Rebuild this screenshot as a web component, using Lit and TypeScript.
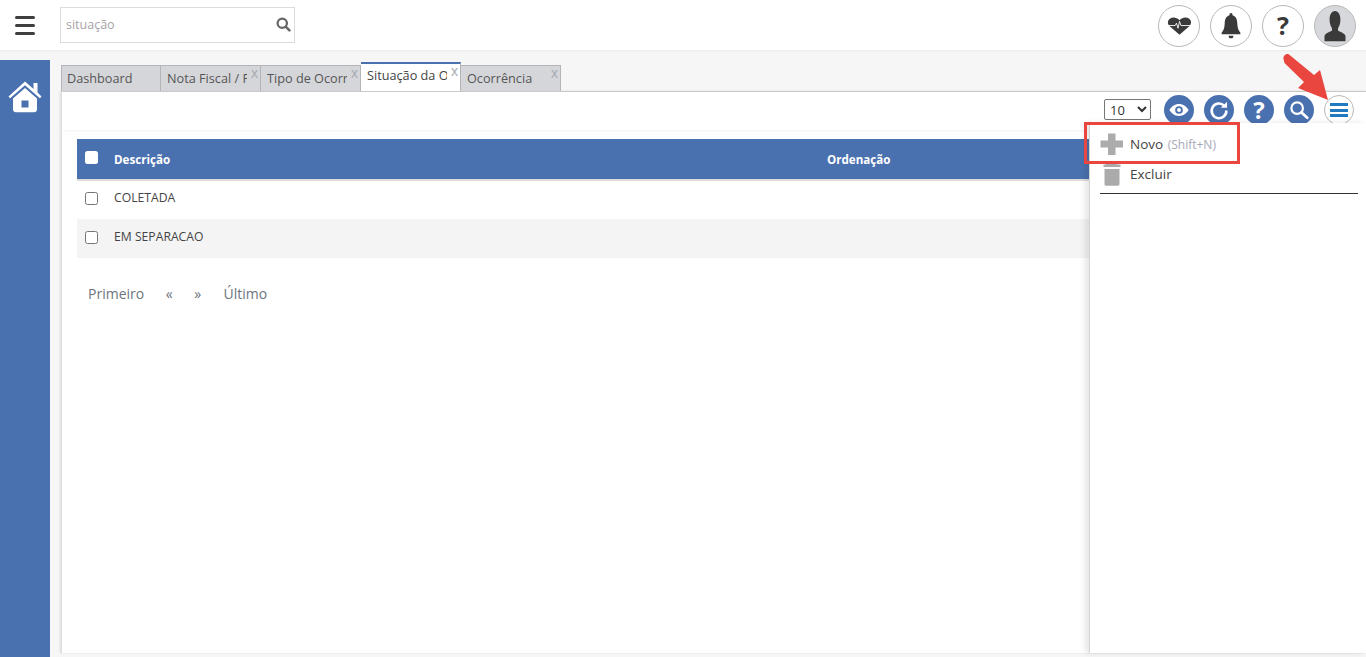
import { LitElement, html, css, svg } from "lit";
import { customElement } from "lit/decorators.js";

const heart = svg`<path d="M12 21.5 2.6 12.2C.2 9.6.4 6 2.7 4 5.3 1.900 9.4 2.300 12 5.600 14.600 2.300 18.700 1.900 21.300 4c2.300 2 2.500 5.600.1 8.200Z" fill="#3a3a3a"/><path d="M1.500 11.500h6.300l1.300-2.600 1.500 5.600 1.400-7.500 1.400 4.500h9" fill="none" stroke="#fff" stroke-width=".9"/>`;
const bell = svg`<path fill="#3a3a3a" d="M12 1a1.500 1.500 0 0 1 1.500 1.800c3.600.9 4.700 3.800 4.800 7.400.1 4 1.200 6.300 3.100 8.300v1.200H2.600v-1.200c1.900-2 3-4.300 3.100-8.300.1-3.600 1.200-6.500 4.800-7.400A1.500 1.500 0 0 1 12 1Z"/><path fill="#3a3a3a" d="M9.600 21h4.800a2.400 2.400 0 0 1-4.800 0Z"/>`;
const user = svg`<path fill="#3a3a3a" d="M12 1.500c3.400 0 5.400 2.700 5.400 6.200 0 2.700-1 5-2.400 6.300v1.700c1.600 1 6.500 1.600 7.500 4v3.800H1.500v-3.800c1-2.400 5.900-3 7.500-4V14c-1.400-1.300-2.400-3.600-2.400-6.300 0-3.500 2-6.200 5.400-6.200Z"/>`;
const eye = svg`<path fill="#fff" d="M12 5.500c4.600 0 8.300 2.900 10.500 6.500-2.200 3.600-5.900 6.500-10.500 6.500S3.700 15.600 1.500 12C3.700 8.400 7.400 5.500 12 5.500Zm0 2.300A4.200 4.200 0 1 0 12 16.200 4.200 4.200 0 0 0 12 7.800Zm0 2a2.200 2.200 0 1 1 0 4.400 2.200 2.200 0 0 1 0-4.400Z"/>`;
const refresh = svg`<path fill="none" stroke="#fff" stroke-width="2.800" d="M17.800 7.400A8 8 0 1 0 20 12.500"/><path fill="#fff" d="M14 9.500 20.800 3v6.500Z"/>`;
const search = svg`<circle cx="10" cy="10" r="6.300" fill="none" stroke="#fff" stroke-width="2.400"/><path d="m14.700 14.700 6.300 5.800" stroke="#fff" stroke-width="3" stroke-linecap="round"/>`;

@customElement("app-root")
export class AppRoot extends LitElement {
  static styles = css`
    :host { display: block; height: 657px; overflow: hidden; position: relative; background: #f6f6f6;
      font-family: "Open Sans", "Noto Sans", sans-serif; color: #444; font-size: 13px; }
    .top { height: 50px; background: #fff; display: flex; align-items: center; box-shadow: 0 1px 2px rgba(0,0,0,.05); }
    .burger { width: 20px; margin-left: 15px; display: flex; flex-direction: column; gap: 5px; }
    .burger i { display: block; height: 3px; border-radius: 2px; background: #3f3f3f; }
    .searchbox { box-sizing: border-box; margin-left: 25px; width: 235px; height: 36px; margin-top: -1px; border: 1px solid #dcdcdc;
      display: flex; align-items: center; justify-content: space-between; padding: 0 3px 0 5px; color: #a9a3a6; font-size: 12.500px; }
    .searchbox svg { width: 15px; height: 15px; }
    .tops { margin-left: auto; display: flex; gap: 10px; margin-right: 10px; margin-top: 1px; }
    .round { box-sizing: border-box; width: 42px; height: 42px; border-radius: 50%; border: 1px solid #b9b9b9; display: flex; align-items: center; justify-content: center; background: #fff; }
    .round.g { background: #d7d8dc; }
    .round svg { display: block; }
    .round .h { width: 25px; height: 22px; }
    .round .bl { width: 24px; height: 27px; }
    .round .u { width: 24px; height: 33px; }
    .round b { font: 700 25px/1 "Open Sans", sans-serif; color: #3a3a3a; }
    .body { display: flex; height: 597px; margin-top: 10px; }
    .side { width: 50px; background: #4a71af; flex: none; display: flex; justify-content: center; padding-top: 20px; box-sizing: border-box; }
    .side svg { width: 34px; height: 33px; }
    .main { margin-left: 11px; flex: 1; min-width: 0; display: flex; flex-direction: column; }
    .tabs { display: flex; height: 26px; padding-top: 5px; flex: none; align-items: flex-end; }
    .tab { box-sizing: border-box; width: 100px; height: 26px; background: #d5d6da; border: 1px solid #b5b5b8; border-bottom: none; position: relative; padding: 3px 5px 0 6px; font-size: 12.700px; line-height: 18px; color: #555; white-space: nowrap; }
    .tab:first-child { padding-left: 5px; }
    .tab + .tab { border-left: none; }
    .tab span { display: block; overflow: hidden; width: 80px; }
    .tab em { position: absolute; right: 2px; top: 0; font: 400 14px/15px "Liberation Sans", sans-serif; color: #a9abb3; }
    .tab.on { height: 29px; background: #fff; border-color: #b5b5b8; border-top: 2px solid #4a71af; padding-top: 2px; color: #444; }
    .panel { background: #fff; border-top: 1px solid #c9c9c9; border-left: 1px solid #ddd; box-shadow: -1px 0 2px rgba(0,0,0,.1); height: 562px; flex: none; box-sizing: border-box; }
    .tools { height: 38px; box-sizing: border-box; display: flex; align-items: flex-start; justify-content: flex-end; padding: 3px 12px 0 0; box-shadow: 0 2px 2px -1px rgba(0,0,0,.06); gap: 10px; }
    .sel { box-sizing: border-box; width: 47px; height: 21px; font: 13px "Open Sans", sans-serif; margin: 4px 3px 0 0; background: #fff; color: #333; border: 1px solid #767676; border-radius: 2px; padding: 0 0 0 1px; }
    .ci { width: 30px; height: 30px; box-sizing: border-box; border-radius: 50%; background: #4a71af; display: flex; align-items: center; justify-content: center; }
    .ci svg { width: 22px; height: 22px; }
    .ci b { font: 700 24px/1 "Open Sans", sans-serif; color: #fff; }
    .ci.menu { background: #fff; border: 1px solid #b9b9b9; flex-direction: column; gap: 2.500px; }
    .ci.menu i { display: block; width: 18px; height: 3px; background: #2179bf; }
    table { border-collapse: collapse; width: 1289px; margin: 9px 0 0 15px; table-layout: fixed; }
    th { height: 41px; background: #4a71af; color: #fff; font-size: 11.600px; font-weight: 700; text-align: left; padding: 0; border-bottom: 2px solid #dcdcdc; box-sizing: border-box; }
    td { height: 39px; padding: 0 0 5px; box-sizing: border-box; font-size: 12.200px; color: #444; }
    tr.alt td { background: #f4f4f4; }
    .c0 { width: 37px; }
    .c1 { width: 713px; }
    .box { display: block; box-sizing: border-box; width: 13px; height: 13px; margin-left: 8px; border: 1px solid #767676; border-radius: 2.500px; background: #fff; }
    th .box { border: none; margin-bottom: 3px; }
    td .box { margin-top: 2px; }
    .pager { display: flex; gap: 21.500px; padding: 27px 0 0 26px; color: #6c757d; font-size: 14px; line-height: 18px; }
    .pager span:last-child { margin-left: 1px; }
    .drawer { position: absolute; left: 1089px; top: 123px; width: 277px; height: 530px; background: #fff; border-left: 1px solid #d5d5d5; box-shadow: -4px 0 6px rgba(0,0,0,.1); box-sizing: border-box; padding: 6px 8px 0 10px; }
    .it { display: flex; align-items: center; height: 30px; color: #444; font-size: 13.500px; gap: 7px; }
    .it svg { width: 23px; height: 24px; flex: none; }
    .it small { font-size: 12px; color: #a6a9b8; margin-left: 1px; }
    .rule { height: 1px; background: #333; margin-top: 4px; }
    .redbox { position: absolute; left: 1084px; top: 122px; width: 156px; height: 42px; box-sizing: border-box; border: 3px solid #e8463f; }
    .arrow { position: absolute; left: 1280px; top: 53px; width: 60px; height: 50px; }
  `;
  render() {
    return html`
      <div class="top">
        <div class="burger"><i></i><i></i><i></i></div>
        <div class="searchbox"><span>situação</span>
          <svg viewBox="0 0 24 24"><circle cx="10" cy="10" r="7.500" fill="none" stroke="#666" stroke-width="3.600"/><path d="m15.500 15.500 6 6" stroke="#666" stroke-width="4" stroke-linecap="round"/></svg>
        </div>
        <div class="tops">
          <div class="round"><svg class="h" viewBox="0 0 24 24" preserveAspectRatio="none">${heart}</svg></div>
          <div class="round"><svg class="bl" viewBox="0 0 24 24" preserveAspectRatio="none">${bell}</svg></div>
          <div class="round"><b>?</b></div>
          <div class="round g"><svg class="u" viewBox="0 0 24 24" preserveAspectRatio="none">${user}</svg></div>
        </div>
      </div>
      <div class="body">
        <div class="side">
          <svg viewBox="0 0 34 33"><path fill="#fff" d="M17 1.500 25.500 9V3h4v9.500l4 4-1.600 1.800L17 5.200 2.100 18.300.5 16.500Z"/><path fill="#fff" fill-rule="evenodd" d="M17 8l12 10.500v10.700c0 1.700-1.200 3-3 3H8c-1.800 0-3-1.300-3-3V18.500Zm-3.500 12.500v7h7v-7Z"/></svg>
        </div>
        <div class="main">
          <div class="tabs">
            <div class="tab"><span>Dashboard</span></div>
            <div class="tab"><span>Nota Fiscal / Pedido</span><em>x</em></div>
            <div class="tab"><span>Tipo de Ocorrência</span><em>x</em></div>
            <div class="tab on"><span>Situação da Ocorrência</span><em>x</em></div>
            <div class="tab"><span>Ocorrência</span><em>x</em></div>
          </div>
          <div class="panel">
            <div class="tools">
              <select class="sel"><option>10</option></select>
              <div class="ci"><svg viewBox="0 0 24 24">${eye}</svg></div>
              <div class="ci"><svg viewBox="0 0 24 24">${refresh}</svg></div>
              <div class="ci"><b>?</b></div>
              <div class="ci"><svg viewBox="0 0 24 24">${search}</svg></div>
              <div class="ci menu"><i></i><i></i><i></i></div>
            </div>
            <table>
              <thead><tr><th class="c0"><span class="box"></span></th><th class="c1">Descrição</th><th>Ordenação</th></tr></thead>
              <tbody>
                <tr><td><span class="box"></span></td><td>COLETADA</td><td></td></tr>
                <tr class="alt"><td><span class="box"></span></td><td>EM SEPARACAO</td><td></td></tr>
              </tbody>
            </table>
            <div class="pager"><span>Primeiro</span><span>«</span><span>»</span><span>Último</span></div>
          </div>
        </div>
      </div>
      <div class="drawer">
        <div class="it"><svg viewBox="0 0 23 24"><path fill="#ababab" d="M8 1.500h7.500V8.500H23V15.500H15.500V23H8V15.500H.5V8.500H8Z"/></svg><span>Novo <small>(Shift+N)</small></span></div>
        <div class="it"><svg viewBox="0 0 23 24"><path fill="#ababab" d="M6 1h11v1.500h3.500v2.500H3.500V2.500H6Zm-1.500 6h15v15c0 1-.8 1.800-1.800 1.800H6.300c-1 0-1.800-.8-1.800-1.800Z"/></svg><span>Excluir</span></div>
        <div class="rule"></div>
      </div>
      <div class="redbox"></div>
      <svg class="arrow" viewBox="0 0 60 50"><path fill="#e8463f" d="M3.500 6C3 3 6 0 9 1.500L34 22 40 17 48 47 18 35 24 29 4.500 10Z"/></svg>
    `;
  }
}
